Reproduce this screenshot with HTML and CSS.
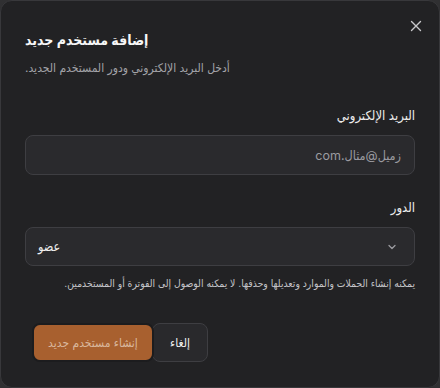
FILE: index.html
```html
<!DOCTYPE html>
<html lang="ar" dir="rtl">
<head>
    <meta charset="UTF-8">
    <meta name="viewport" content="width=device-width, initial-scale=1.0">
    <title>إضافة مستخدم جديد</title>
    <link rel="stylesheet" href="styles.css">
</head>
<body>
    <div class="dialog">
        <button class="close-btn" aria-label="إغلاق">
            <svg width="12" height="12" viewBox="0 0 12 12"><path d="M1.5 1.5l9 9M10.5 1.5l-9 9" stroke="currentColor" stroke-width="1.4" stroke-linecap="round"/></svg>
        </button>
        <div class="dialog-header">
            <h2>إضافة مستخدم جديد</h2>
            <p class="description">أدخل البريد الإلكتروني ودور المستخدم الجديد.</p>
        </div>
        <form class="user-form">
            <div class="form-group">
                <label for="email">البريد الإلكتروني</label>
                <input type="email" id="email" placeholder="زميل@مثال.com">
            </div>
            <div class="form-group">
                <label>الدور</label>
                <div class="select-trigger">
                    <span class="select-value">عضو</span>
                    <svg width="12" height="12" viewBox="0 0 12 12"><path d="M3 4.5l3 3 3-3" fill="none" stroke="currentColor" stroke-width="1.3" stroke-linecap="round" stroke-linejoin="round"/></svg>
                </div>
                <p class="hint">يمكنه إنشاء الحملات والموارد وتعديلها وحذفها. لا يمكنه الوصول إلى الفوترة أو المستخدمين.</p>
            </div>
            <div class="dialog-footer">
                <button type="submit" class="btn btn-primary" disabled>إنشاء مستخدم جديد</button>
                <button type="button" class="btn btn-outline">إلغاء</button>
            </div>
        </form>
    </div>
</body>
</html>
```

FILE: styles.css
```css
* {
    margin: 0;
    padding: 0;
    box-sizing: border-box;
}

body {
    font-family: Inter, 'DejaVu Sans Condensed', sans-serif;
    background: #303032;
    width: 440px;
    height: 388px;
}

.dialog {
    position: relative;
    width: 440px;
    height: 388px;
    background: #222224;
    border: 1px solid #38383b;
    border-radius: 12px;
    padding: 29px 24px 0;
    color: #f2f2f2;
}

.close-btn {
    position: absolute;
    top: 19px;
    left: 409px;
    width: 12px;
    height: 12px;
    background: none;
    border: none;
    color: #c8c8cb;
    display: flex;
}

.dialog-header {
    text-align: left;
}

h2 {
    font-size: 14px;
    line-height: 20px;
    font-weight: 700;
    color: #f7f7f7;
}

.description {
    margin-top: 9px;
    font-size: 12px;
    line-height: 18px;
    color: #a3a3a8;
}

.user-form {
    margin-top: 29px;
}

.form-group {
    margin-bottom: 23px;
}

label {
    display: block;
    font-size: 13px;
    line-height: 18px;
    font-weight: 500;
    color: #ededed;
    margin-bottom: 11px;
}

input[type="email"] {
    width: 100%;
    height: 40px;
    padding: 0 13px;
    background: #2a2a2d;
    border: 1px solid #3e3e42;
    border-radius: 8px;
    font-family: inherit;
    font-size: 12.5px;
    color: #eee;
    outline: none;
}

input::placeholder {
    color: #9b9ba0;
}

.select-trigger {
    direction: ltr;
    display: flex;
    align-items: center;
    justify-content: space-between;
    height: 39px;
    padding: 0 16px 0 12px;
    background: #2a2a2d;
    border: 1px solid #3e3e42;
    border-radius: 8px;
    color: #9b9ba0;
}

.select-value {
    font-size: 12.5px;
    color: #f0f0f0;
}

.hint {
    margin-top: 9px;
    font-size: 10.3px;
    line-height: 16px;
    color: #c4c4c8;
}

.dialog-footer {
    direction: ltr;
    display: flex;
    padding-top: 9px;
    padding-left: 7px;
}

.btn {
    height: 39px;
    border-radius: 8px;
    font-family: inherit;
    font-size: 12px;
}

.btn-primary {
    width: 122px;
    background: #a8602f;
    border: 2px solid #1c1c1e;
    color: #d9b79d;
    position: relative;
    z-index: 1;
}

.btn-outline {
    width: 56px;
    margin-left: -2px;
    background: #29292c;
    border: 1px solid #3e3e42;
    color: #f0f0f0;
}
```
